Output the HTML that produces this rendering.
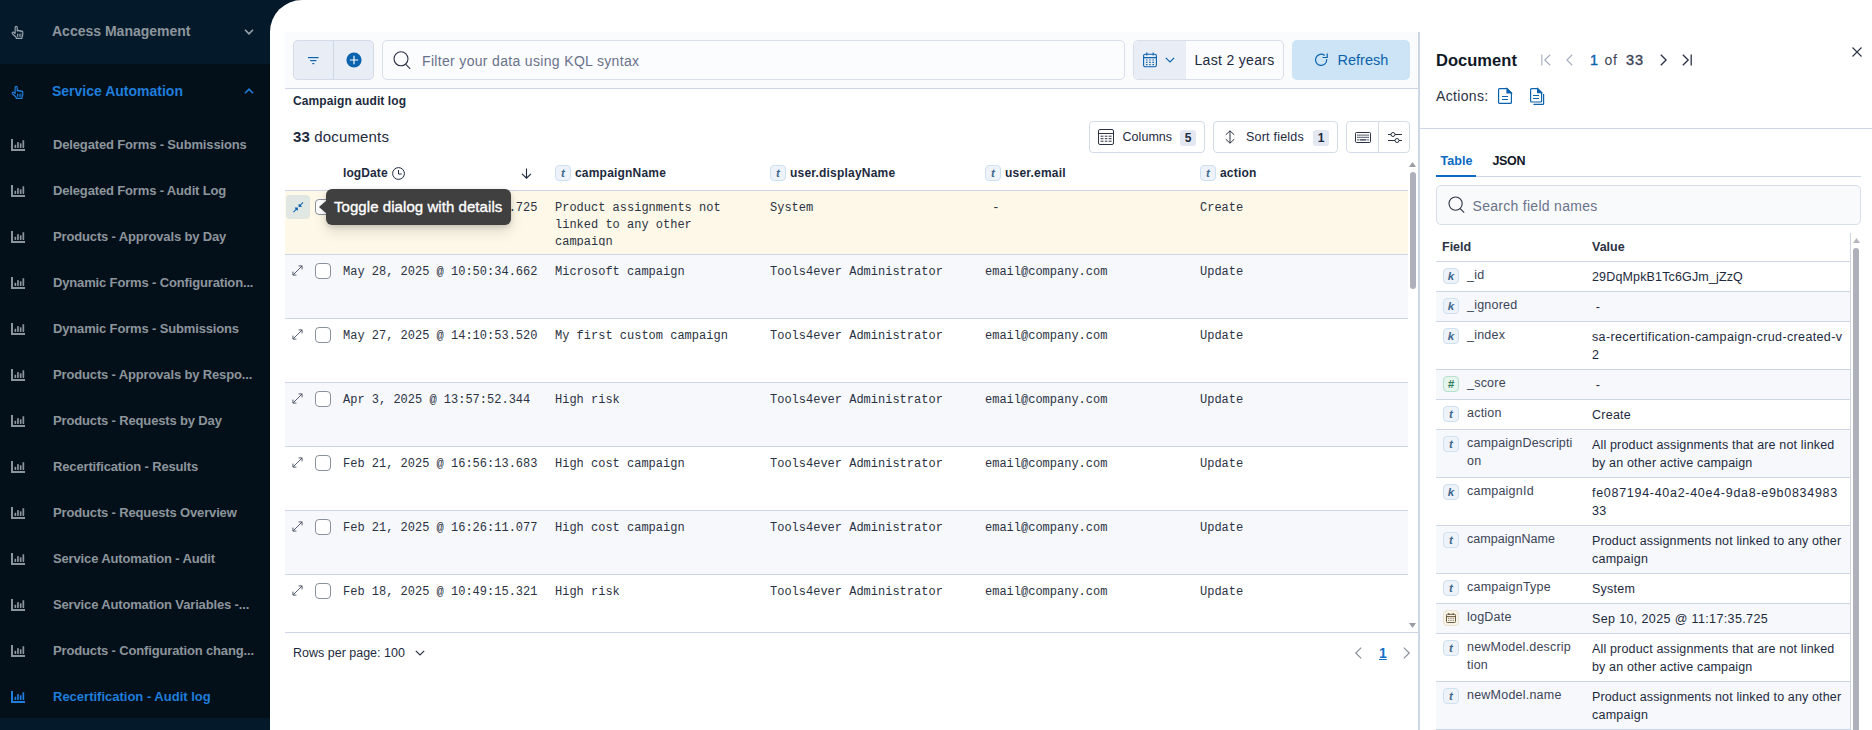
<!DOCTYPE html>
<html lang="en">
<head>
<meta charset="utf-8">
<title>Recertification - Audit log</title>
<style>
*{box-sizing:border-box;margin:0;padding:0}
html,body{width:1872px;height:730px;overflow:hidden;background:#03101a;font-family:"Liberation Sans",sans-serif;color:#1d2a3e}
.abs{position:absolute}
svg{display:block;overflow:visible}
/* ---------- sidebar ---------- */
#side{position:absolute;left:0;top:0;width:270px;height:730px;background:#03101a}
#side .topband{position:absolute;left:0;top:0;width:330px;height:64px;background:#041a2b}
#side .botband{position:absolute;left:0;top:718px;width:270px;height:12px;background:#041a2b}
.grp{position:absolute;left:52px;font-size:14px;font-weight:bold;letter-spacing:0px;white-space:nowrap;line-height:20px}
.nav{position:absolute;left:53px;font-size:13px;font-weight:bold;color:#8d959c;white-space:nowrap;line-height:20px;letter-spacing:-0.15px}
.nav.on{color:#1f7ddb;letter-spacing:0}
.ico{position:absolute;left:10px}
/* ---------- main ---------- */
#main{position:absolute;left:270px;top:0;width:1602px;height:730px;background:#fff;border-top-left-radius:32px}

/* toolbar */
#tb{position:absolute;left:15px;top:32px;width:1133px;height:57px;background:#fafbfd;border-bottom:1px solid #cdd6e5}
.btn2{position:absolute;left:23px;top:40px;width:81px;height:40px;background:#e9edf5;border:1px solid #d3dbe9;border-radius:5px}
.btn2 i{position:absolute;left:39px;top:0;width:1px;height:38px;background:#cfd7e6}
.inp{position:absolute;background:#fbfcfe;border:1px solid #d8deea;border-radius:5px}
.ph{position:absolute;color:#69728a;font-size:14px;white-space:nowrap;line-height:20px}
.t14{position:absolute;font-size:14px;white-space:nowrap;line-height:20px;color:#1d2a3e}
.t12b{position:absolute;font-size:12px;font-weight:bold;white-space:nowrap;line-height:16px;color:#1d2a3e}
.obtn{position:absolute;height:32px;top:121px;border:1px solid #d3dbe9;border-radius:4px;background:#fff}
.badge{position:absolute;top:8px;height:16px;background:#e3e8f2;border-radius:3px;font-size:12px;font-weight:bold;line-height:16px;text-align:center;color:#1d2a3e}

/* grid */
#grid{position:absolute;left:15px;top:157px;width:1123px;height:476px;overflow:hidden;border-bottom:1px solid #cdd6e5}
.hd{position:absolute;top:0;left:0;width:1123px;height:34px;border-bottom:1px solid #cdd6e5;background:#fff}
.tok{position:absolute;width:16px;height:16px;border:1px solid #cfe0f1;background:#eef3f9;border-radius:4px;color:#41688f;font:italic bold 11.5px/14px "Liberation Sans",sans-serif;text-align:center}
.row{position:absolute;left:0;width:1123px;height:64px;border-bottom:1px solid #cdd6e5;background:#fff}
.row.st{background:#f6f8fc}
.row.hl{background:#fdf8e7}
.c{position:absolute;top:9px;font:12px/17px "Liberation Mono",monospace;color:#2b3243;white-space:pre;letter-spacing:0}
.cb{position:absolute;left:30px;top:8px;width:16px;height:16px;border:1px solid #8b919c;border-radius:4px;background:#fff}
.ex{position:absolute;left:7px;top:10px}

/* flyout */
#fly{position:absolute;left:1148px;top:32px;width:454px;height:698px;background:#fff;border-left:2px solid #cdd5e6;overflow:hidden}
#fly .hb{position:absolute;left:0;top:96px;width:452px;height:1px;background:#cdd6e5}
#fly .tabs{position:absolute;left:16px;top:144px;width:425px;height:1px;background:#cdd6e5}
.fr{position:absolute;left:16px;width:415px;border-bottom:1px solid #cdd6e5;background:#fff}
.fr.st{background:#f6f8fc}
.fn{position:absolute;left:31px;top:4px;font-size:12.5px;line-height:18px;color:#3c4456;white-space:nowrap}
.fv{position:absolute;left:156px;top:6px;font-size:12.5px;line-height:18px;color:#1d2a3e;white-space:nowrap}
</style>
</head>
<body>
<div id="side">
  <div class="topband"></div>
  <div class="botband"></div>
  <svg class="ico" style="top:25px;left:10.5px" width="12.6" height="14.4" viewBox="0 0 14 16" fill="none" stroke="#9aa4ad" stroke-width="1.3" stroke-linejoin="round" stroke-linecap="round"><path d="M4.6 9.2V2.6a1.15 1.15 0 0 1 2.3 0v4.2M6.9 6.6a1.1 1.1 0 0 1 2.1 .2M9 7a1.1 1.1 0 0 1 2.1 .2M11.100 7.400a1.050 1.050 0 0 1 2 .3V10.6c0 1.200-.6 2.200-.9 2.900v1.300H5.800v-1.100C4.600 12.600 2.900 10.900 1.600 9.700a1.100 1.100 0 0 1 1.500-1.600l1.500 1.300"/><path d="M7.200 10.100v2.600M9.100 10.100v2.600M11 10.100v2.600" stroke-width="1.1"/></svg>
  <div class="grp" style="top:21px;color:#8d959c">Access Management</div>
  <svg class="abs" style="left:244px;top:29px" width="10" height="6" viewBox="0 0 10 6" fill="none" stroke="#9aa4ad" stroke-width="1.600"><path d="M1 .8l4 4 4-4"/></svg>
  <svg class="ico" style="top:85px;left:10.5px" width="12.6" height="14.4" viewBox="0 0 14 16" fill="none" stroke="#1f7ddb" stroke-width="1.3" stroke-linejoin="round" stroke-linecap="round"><path d="M4.6 9.2V2.6a1.15 1.15 0 0 1 2.3 0v4.2M6.9 6.6a1.1 1.1 0 0 1 2.1 .2M9 7a1.1 1.1 0 0 1 2.1 .2M11.100 7.400a1.050 1.050 0 0 1 2 .3V10.6c0 1.200-.6 2.200-.9 2.900v1.300H5.800v-1.100C4.600 12.600 2.900 10.900 1.600 9.700a1.100 1.100 0 0 1 1.500-1.600l1.500 1.300"/><path d="M7.200 10.100v2.600M9.100 10.100v2.600M11 10.100v2.600" stroke-width="1.1"/></svg>
  <div class="grp" style="top:81px;color:#1f7ddb">Service Automation</div>
  <svg class="abs" style="left:244px;top:88px" width="10" height="6" viewBox="0 0 10 6" fill="none" stroke="#1f7ddb" stroke-width="1.600"><path d="M1 5.200l4-4 4 4"/></svg>
  <svg class="ico" style="top:139px;left:10.5px" width="14" height="12" viewBox="0 0 14 12" fill="#8d959c"><path d="M0 0h2v10h12v2H0z"/><rect x="3.500" y="5.700" width="1.700" height="3.300" rx=".4"/><rect x="6.100" y="3" width="1.700" height="6" rx=".4"/><rect x="8.800" y="4.300" width="1.700" height="4.700" rx=".4"/><rect x="11.500" y="1.200" width="1.700" height="7.800" rx=".4"/></svg>
  <div class="nav" style="top:135px">Delegated Forms - Submissions</div>
  <svg class="ico" style="top:185px;left:10.5px" width="14" height="12" viewBox="0 0 14 12" fill="#8d959c"><path d="M0 0h2v10h12v2H0z"/><rect x="3.500" y="5.700" width="1.700" height="3.300" rx=".4"/><rect x="6.100" y="3" width="1.700" height="6" rx=".4"/><rect x="8.800" y="4.300" width="1.700" height="4.700" rx=".4"/><rect x="11.500" y="1.200" width="1.700" height="7.800" rx=".4"/></svg>
  <div class="nav" style="top:181px">Delegated Forms - Audit Log</div>
  <svg class="ico" style="top:231px;left:10.5px" width="14" height="12" viewBox="0 0 14 12" fill="#8d959c"><path d="M0 0h2v10h12v2H0z"/><rect x="3.500" y="5.700" width="1.700" height="3.300" rx=".4"/><rect x="6.100" y="3" width="1.700" height="6" rx=".4"/><rect x="8.800" y="4.300" width="1.700" height="4.700" rx=".4"/><rect x="11.500" y="1.200" width="1.700" height="7.800" rx=".4"/></svg>
  <div class="nav" style="top:227px">Products - Approvals by Day</div>
  <svg class="ico" style="top:277px;left:10.5px" width="14" height="12" viewBox="0 0 14 12" fill="#8d959c"><path d="M0 0h2v10h12v2H0z"/><rect x="3.500" y="5.700" width="1.700" height="3.300" rx=".4"/><rect x="6.100" y="3" width="1.700" height="6" rx=".4"/><rect x="8.800" y="4.300" width="1.700" height="4.700" rx=".4"/><rect x="11.500" y="1.200" width="1.700" height="7.800" rx=".4"/></svg>
  <div class="nav" style="top:273px">Dynamic Forms - Configuration...</div>
  <svg class="ico" style="top:323px;left:10.5px" width="14" height="12" viewBox="0 0 14 12" fill="#8d959c"><path d="M0 0h2v10h12v2H0z"/><rect x="3.500" y="5.700" width="1.700" height="3.300" rx=".4"/><rect x="6.100" y="3" width="1.700" height="6" rx=".4"/><rect x="8.800" y="4.300" width="1.700" height="4.700" rx=".4"/><rect x="11.500" y="1.200" width="1.700" height="7.800" rx=".4"/></svg>
  <div class="nav" style="top:319px">Dynamic Forms - Submissions</div>
  <svg class="ico" style="top:369px;left:10.5px" width="14" height="12" viewBox="0 0 14 12" fill="#8d959c"><path d="M0 0h2v10h12v2H0z"/><rect x="3.500" y="5.700" width="1.700" height="3.300" rx=".4"/><rect x="6.100" y="3" width="1.700" height="6" rx=".4"/><rect x="8.800" y="4.300" width="1.700" height="4.700" rx=".4"/><rect x="11.500" y="1.200" width="1.700" height="7.800" rx=".4"/></svg>
  <div class="nav" style="top:365px">Products - Approvals by Respo...</div>
  <svg class="ico" style="top:415px;left:10.5px" width="14" height="12" viewBox="0 0 14 12" fill="#8d959c"><path d="M0 0h2v10h12v2H0z"/><rect x="3.500" y="5.700" width="1.700" height="3.300" rx=".4"/><rect x="6.100" y="3" width="1.700" height="6" rx=".4"/><rect x="8.800" y="4.300" width="1.700" height="4.700" rx=".4"/><rect x="11.500" y="1.200" width="1.700" height="7.800" rx=".4"/></svg>
  <div class="nav" style="top:411px">Products - Requests by Day</div>
  <svg class="ico" style="top:461px;left:10.5px" width="14" height="12" viewBox="0 0 14 12" fill="#8d959c"><path d="M0 0h2v10h12v2H0z"/><rect x="3.500" y="5.700" width="1.700" height="3.300" rx=".4"/><rect x="6.100" y="3" width="1.700" height="6" rx=".4"/><rect x="8.800" y="4.300" width="1.700" height="4.700" rx=".4"/><rect x="11.500" y="1.200" width="1.700" height="7.800" rx=".4"/></svg>
  <div class="nav" style="top:457px">Recertification - Results</div>
  <svg class="ico" style="top:507px;left:10.5px" width="14" height="12" viewBox="0 0 14 12" fill="#8d959c"><path d="M0 0h2v10h12v2H0z"/><rect x="3.500" y="5.700" width="1.700" height="3.300" rx=".4"/><rect x="6.100" y="3" width="1.700" height="6" rx=".4"/><rect x="8.800" y="4.300" width="1.700" height="4.700" rx=".4"/><rect x="11.500" y="1.200" width="1.700" height="7.800" rx=".4"/></svg>
  <div class="nav" style="top:503px">Products - Requests Overview</div>
  <svg class="ico" style="top:553px;left:10.5px" width="14" height="12" viewBox="0 0 14 12" fill="#8d959c"><path d="M0 0h2v10h12v2H0z"/><rect x="3.500" y="5.700" width="1.700" height="3.300" rx=".4"/><rect x="6.100" y="3" width="1.700" height="6" rx=".4"/><rect x="8.800" y="4.300" width="1.700" height="4.700" rx=".4"/><rect x="11.500" y="1.200" width="1.700" height="7.800" rx=".4"/></svg>
  <div class="nav" style="top:549px">Service Automation - Audit</div>
  <svg class="ico" style="top:599px;left:10.5px" width="14" height="12" viewBox="0 0 14 12" fill="#8d959c"><path d="M0 0h2v10h12v2H0z"/><rect x="3.500" y="5.700" width="1.700" height="3.300" rx=".4"/><rect x="6.100" y="3" width="1.700" height="6" rx=".4"/><rect x="8.800" y="4.300" width="1.700" height="4.700" rx=".4"/><rect x="11.500" y="1.200" width="1.700" height="7.800" rx=".4"/></svg>
  <div class="nav" style="top:595px">Service Automation Variables -...</div>
  <svg class="ico" style="top:645px;left:10.5px" width="14" height="12" viewBox="0 0 14 12" fill="#8d959c"><path d="M0 0h2v10h12v2H0z"/><rect x="3.500" y="5.700" width="1.700" height="3.300" rx=".4"/><rect x="6.100" y="3" width="1.700" height="6" rx=".4"/><rect x="8.800" y="4.300" width="1.700" height="4.700" rx=".4"/><rect x="11.500" y="1.200" width="1.700" height="7.800" rx=".4"/></svg>
  <div class="nav" style="top:641px">Products - Configuration chang...</div>
  <svg class="ico" style="top:691px;left:10.5px" width="14" height="12" viewBox="0 0 14 12" fill="#1f7ddb"><path d="M0 0h2v10h12v2H0z"/><rect x="3.500" y="5.700" width="1.700" height="3.300" rx=".4"/><rect x="6.100" y="3" width="1.700" height="6" rx=".4"/><rect x="8.800" y="4.300" width="1.700" height="4.700" rx=".4"/><rect x="11.500" y="1.200" width="1.700" height="7.800" rx=".4"/></svg>
  <div class="nav on" style="top:687px">Recertification - Audit log</div>
</div>
<div id="main">
  <div id="tb"></div>
  <div class="btn2"><i></i>
    <svg class="abs" style="left:14px;top:16px" width="11" height="8" viewBox="0 0 11 8" fill="#0b62ad"><rect x="0" y="0" width="10.600" height="1.200"/><rect x="2.200" y="3" width="6.200" height="1.200"/><rect x="4.300" y="6" width="2" height="1.200"/></svg>
    <svg class="abs" style="left:51.500px;top:10.500px" width="16" height="16" viewBox="0 0 16 16"><circle cx="8" cy="8" r="7.600" fill="#0b62ad"/><path d="M8 3.800v8.400M3.800 8h8.400" stroke="#fff" stroke-width="1.150"/></svg>
  </div>
  <div class="inp" style="left:112px;top:40px;width:743px;height:40px"></div>
  <svg class="abs" style="left:122px;top:50px" width="20" height="20" viewBox="0 0 20 20" fill="none" stroke="#2b3243" stroke-width="1.100"><circle cx="9" cy="8.800" r="7"/><path d="M13.600 14.200l4.600 4.600"/></svg>
  <div class="ph" style="left:152px;top:51px;letter-spacing:.33px">Filter your data using KQL syntax</div>
  <div class="inp" style="left:863px;top:40px;width:151px;height:40px;overflow:hidden"><div style="position:absolute;left:0;top:0;width:52px;height:38px;background:#e9edf5"></div></div>
  <svg class="abs" style="left:873px;top:52px" width="14" height="16" viewBox="0 0 14 16" fill="none" stroke="#0b62ad" stroke-width="1.100"><rect x=".6" y="2.200" width="12.800" height="12.600" rx="1.600"/><path d="M.6 5.600h12.800M3.800 .4v3M10.200 .4v3"/><path d="M3 8h1.500M6.200 8h1.500M9.400 8h1.500M3 10.300h1.500M6.200 10.300h1.500M9.400 10.300h1.500M3 12.600h1.500M6.200 12.600h1.500M9.400 12.600h1.500" stroke-width="1.200"/></svg>
  <svg class="abs" style="left:895px;top:57px" width="10" height="6" viewBox="0 0 10 6" fill="none" stroke="#0b62ad" stroke-width="1.200"><path d="M.8 .8l4.200 4.200 4.200-4.200"/></svg>
  <div class="t14" style="left:924.500px;top:50px;letter-spacing:.32px">Last 2 years</div>
  <div class="abs" style="left:1022px;top:40px;width:118px;height:40px;background:#cce4f5;border-radius:5px"></div>
  <svg class="abs" style="left:1043px;top:52px" width="15" height="16" viewBox="0 0 15 16" fill="none" stroke="#0b62ad" stroke-width="1.200"><path d="M11.700 3.500A5.600 5.600 0 1 0 13.700 7.300"/><path d="M14.200 1.400V5.500H9.600" stroke-linejoin="miter"/></svg>
  <div class="t14" style="left:1067.500px;top:50px;color:#0b62ad;font-size:14.5px">Refresh</div>

  <div class="t12b" style="left:23px;top:93px;letter-spacing:.1px">Campaign audit log</div>
  <div class="t14" style="left:23px;top:127px;letter-spacing:.15px;font-size:15px"><b>33</b> documents</div>

  <div class="obtn" style="left:819px;width:116px">
    <svg class="abs" style="left:8px;top:7px" width="16" height="16" viewBox="0 0 16 16" fill="none" stroke="#2b3243" stroke-width="1"><rect x=".5" y=".5" width="15" height="15" rx="1.500"/><path d="M.5 4.500h15M2.500 7.200h3M6.800 7.200h2.600M10.600 7.200h3M2.500 9.700h3M6.800 9.700h2.600M10.600 9.700h3M2.500 12.200h3M6.800 12.200h2.600M10.600 12.200h3"/></svg>
    <div class="t14" style="left:32.500px;top:5px;font-size:12.5px;letter-spacing:.05px">Columns</div>
    <div class="badge" style="left:90px;width:16px">5</div>
  </div>
  <div class="obtn" style="left:943px;width:125px">
    <svg class="abs" style="left:11px;top:8px" width="10" height="14" viewBox="0 0 10 14" fill="none" stroke="#2b3243" stroke-width="1"><path d="M5 .8v12.400M.8 4.800L5 .8l4.200 4M.8 9.200L5 13.200l4.200-4"/></svg>
    <div class="t14" style="left:32px;top:5px;font-size:12.5px;letter-spacing:.22px">Sort fields</div>
    <div class="badge" style="left:99px;width:16px">1</div>
  </div>
  <div class="obtn" style="left:1076px;width:64px"><i style="position:absolute;left:31px;top:0;width:1px;height:30px;background:#d3dbe9"></i>
    <svg class="abs" style="left:8px;top:10px" width="16" height="11" viewBox="0 0 16 11" fill="none" stroke="#2b3243" stroke-width="1"><rect x=".5" y=".5" width="15" height="10" rx="1"/><path d="M2.300 3.200h11.400M2.300 5.400h11.400" stroke-dasharray="1.300 .72" stroke-width="1.300"/><path d="M2.300 7.800h1.300M4.600 7.800h6.800M12.400 7.800h1.300" stroke-width="1.300"/></svg>
    <svg class="abs" style="left:41px;top:10px" width="14" height="11" viewBox="0 0 14 11" fill="none" stroke="#2b3243" stroke-width="1"><path d="M0 2.500h3M7 2.500h7M0 8.500h7M11 8.500h3"/><circle cx="5" cy="2.500" r="2"/><circle cx="9" cy="8.500" r="2"/></svg>
  </div>
<div id="grid">
<div class="hd">
<div class="t12b" style="left:58px;top:8px;letter-spacing:.1px">logDate</div>
<svg class="abs" style="left:107px;top:10px" width="13" height="13" viewBox="0 0 13 13" fill="none" stroke="#1d2a3e" stroke-width="1"><circle cx="6.500" cy="6.500" r="5.900"/><path d="M6.500 3v4h3.200"/></svg>
<svg class="abs" style="left:236px;top:11px" width="11" height="11" viewBox="0 0 11 11" fill="none" stroke="#1d2a3e" stroke-width="1.100"><path d="M5.500 .5v9.500M1 5.800l4.500 4.400 4.500-4.400"/></svg>
<div class="tok" style="left:270px;top:8px">t</div><div class="t12b" style="left:290px;top:8px;letter-spacing:.2px">campaignName</div>
<div class="tok" style="left:485px;top:8px">t</div><div class="t12b" style="left:505px;top:8px;letter-spacing:.2px">user.displayName</div>
<div class="tok" style="left:700px;top:8px">t</div><div class="t12b" style="left:720px;top:8px;letter-spacing:.2px">user.email</div>
<div class="tok" style="left:915px;top:8px">t</div><div class="t12b" style="left:935px;top:8px;letter-spacing:.2px">action</div>
</div>
<div class="row hl" style="top:34px">
<div class="abs" style="left:1px;top:4px;width:24px;height:24px;border-radius:4px;background:#e1e8e4"></div><svg class="abs" style="left:8px;top:11px" width="10.500" height="10.500" viewBox="0 0 12 12" fill="none" stroke="#0f62ad" stroke-width="1.150"><path d="M11.500 .5L7 5M7 2.200V5h2.800M.5 11.500L5 7M2.200 7H5v2.800"/></svg>
<div class="cb"></div>
<div class="c" style="left:58px">Sep 10, 2025 @ 11:17:35.725</div>
<div class="c" style="left:270px;height:46px;overflow:hidden">Product assignments not
linked to any other
campaign</div>
<div class="c" style="left:485px">System</div>
<div class="c" style="left:700px"> -</div>
<div class="c" style="left:915px">Create</div>
</div>
<div class="row st" style="top:98px">
<svg class="ex" width="11" height="11" viewBox="0 0 12 12" fill="none" stroke="#454d5e" stroke-width="1"><path d="M1.200 10.800L10.800 1.200M7.200 1h3.800v3.800M1 7.200V11h3.800"/></svg>
<div class="cb"></div>
<div class="c" style="left:58px">May 28, 2025 @ 10:50:34.662</div>
<div class="c" style="left:270px;height:46px;overflow:hidden">Microsoft campaign</div>
<div class="c" style="left:485px">Tools4ever Administrator</div>
<div class="c" style="left:700px">email@company.com</div>
<div class="c" style="left:915px">Update</div>
</div>
<div class="row " style="top:162px">
<svg class="ex" width="11" height="11" viewBox="0 0 12 12" fill="none" stroke="#454d5e" stroke-width="1"><path d="M1.200 10.800L10.800 1.200M7.200 1h3.800v3.800M1 7.200V11h3.800"/></svg>
<div class="cb"></div>
<div class="c" style="left:58px">May 27, 2025 @ 14:10:53.520</div>
<div class="c" style="left:270px;height:46px;overflow:hidden">My first custom campaign</div>
<div class="c" style="left:485px">Tools4ever Administrator</div>
<div class="c" style="left:700px">email@company.com</div>
<div class="c" style="left:915px">Update</div>
</div>
<div class="row st" style="top:226px">
<svg class="ex" width="11" height="11" viewBox="0 0 12 12" fill="none" stroke="#454d5e" stroke-width="1"><path d="M1.200 10.800L10.800 1.200M7.200 1h3.800v3.800M1 7.200V11h3.800"/></svg>
<div class="cb"></div>
<div class="c" style="left:58px">Apr 3, 2025 @ 13:57:52.344</div>
<div class="c" style="left:270px;height:46px;overflow:hidden">High risk</div>
<div class="c" style="left:485px">Tools4ever Administrator</div>
<div class="c" style="left:700px">email@company.com</div>
<div class="c" style="left:915px">Update</div>
</div>
<div class="row " style="top:290px">
<svg class="ex" width="11" height="11" viewBox="0 0 12 12" fill="none" stroke="#454d5e" stroke-width="1"><path d="M1.200 10.800L10.800 1.200M7.200 1h3.800v3.800M1 7.200V11h3.800"/></svg>
<div class="cb"></div>
<div class="c" style="left:58px">Feb 21, 2025 @ 16:56:13.683</div>
<div class="c" style="left:270px;height:46px;overflow:hidden">High cost campaign</div>
<div class="c" style="left:485px">Tools4ever Administrator</div>
<div class="c" style="left:700px">email@company.com</div>
<div class="c" style="left:915px">Update</div>
</div>
<div class="row st" style="top:354px">
<svg class="ex" width="11" height="11" viewBox="0 0 12 12" fill="none" stroke="#454d5e" stroke-width="1"><path d="M1.200 10.800L10.800 1.200M7.200 1h3.800v3.800M1 7.200V11h3.800"/></svg>
<div class="cb"></div>
<div class="c" style="left:58px">Feb 21, 2025 @ 16:26:11.077</div>
<div class="c" style="left:270px;height:46px;overflow:hidden">High cost campaign</div>
<div class="c" style="left:485px">Tools4ever Administrator</div>
<div class="c" style="left:700px">email@company.com</div>
<div class="c" style="left:915px">Update</div>
</div>
<div class="row " style="top:418px">
<svg class="ex" width="11" height="11" viewBox="0 0 12 12" fill="none" stroke="#454d5e" stroke-width="1"><path d="M1.200 10.800L10.800 1.200M7.200 1h3.800v3.800M1 7.200V11h3.800"/></svg>
<div class="cb"></div>
<div class="c" style="left:58px">Feb 18, 2025 @ 10:49:15.321</div>
<div class="c" style="left:270px;height:46px;overflow:hidden">High risk</div>
<div class="c" style="left:485px">Tools4ever Administrator</div>
<div class="c" style="left:700px">email@company.com</div>
<div class="c" style="left:915px">Update</div>
</div>
</div>
<div class="abs" style="left:1138px;top:157px;width:10px;height:475px;background:#fff"></div>
<svg class="abs" style="left:1139px;top:162px" width="7" height="5" viewBox="0 0 7 5" fill="#9a9da3"><path d="M0 5L3.500 0 7 5z"/></svg>
<div class="abs" style="left:1140px;top:172px;width:6px;height:117px;border-radius:3px;background:#aeb1b9"></div>
<svg class="abs" style="left:1139px;top:623px" width="7" height="5" viewBox="0 0 7 5" fill="#9a9da3"><path d="M0 0L3.500 5 7 0z"/></svg>
<div class="abs" style="left:15px;top:632px;width:1133px;height:1px;background:#cdd6e5"></div>
<div class="t14" style="left:23px;top:643px;font-size:12.5px;letter-spacing:0">Rows per page: 100</div>
<svg class="abs" style="left:145px;top:650px" width="10" height="6" viewBox="0 0 10 6" fill="none" stroke="#2b3243" stroke-width="1.200"><path d="M.8 .8l4.200 4.200 4.200-4.200"/></svg>
<svg class="abs" style="left:1085px;top:647px" width="7" height="12" viewBox="0 0 7 12" fill="none" stroke="#8a909c" stroke-width="1.200"><path d="M6.200 .6L.8 6l5.400 5.400"/></svg>
<div class="t14" style="left:1109px;top:643px;font-size:14px;color:#1471c8;text-decoration:underline;font-weight:bold">1</div>
<svg class="abs" style="left:1133px;top:647px" width="7" height="12" viewBox="0 0 7 12" fill="none" stroke="#8a909c" stroke-width="1.200"><path d="M.8 .6L6.200 6 .8 11.400"/></svg>
<div class="abs" style="left:56px;top:189px;width:185px;height:36px;border-radius:6px;background:#404040;box-shadow:0 6px 14px rgba(0,0,0,.13),0 2px 5px rgba(0,0,0,.12)"></div>
<svg class="abs" style="left:49px;top:200px" width="8" height="14" viewBox="0 0 8 14" fill="#404040"><path d="M8 0L0 7l8 7z"/></svg>
<div class="abs" style="left:64px;top:197px;color:#fff;font-size:15px;line-height:20px;white-space:nowrap;letter-spacing:.06px;-webkit-text-stroke:.35px #fff">Toggle dialog with details</div>

  <div id="fly">
    <div class="abs" style="left:16px;top:18px;font-size:16.5px;font-weight:bold;line-height:20px;color:#111827;letter-spacing:.03px">Document</div>
    <svg class="abs" style="left:121px;top:22px" width="10" height="12" viewBox="0 0 10 12" fill="none" stroke="#a9b1c2" stroke-width="1.200"><path d="M.8 .5v11M9.200 .8L3.800 6l5.400 5.200"/></svg>
    <svg class="abs" style="left:146px;top:22px" width="7" height="12" viewBox="0 0 7 12" fill="none" stroke="#a9b1c2" stroke-width="1.200"><path d="M6.200 .8L.9 6l5.300 5.200"/></svg>
    <div class="t14" style="left:170px;top:18px;color:#0b62ad;font-size:14.5px;-webkit-text-stroke:.4px #0b62ad">1</div>
    <div class="t14" style="left:184.500px;top:18px;color:#3c4456;letter-spacing:.6px">of</div>
    <div class="t14" style="left:206px;top:18px;color:#3c4456;letter-spacing:1px;font-size:14.5px;-webkit-text-stroke:.4px #3c4456">33</div>
    <svg class="abs" style="left:240px;top:22px" width="7" height="12" viewBox="0 0 7 12" fill="none" stroke="#2b3243" stroke-width="1.300"><path d="M.8 .8L6.100 6 .8 11.200"/></svg>
    <svg class="abs" style="left:262px;top:22px" width="10" height="12" viewBox="0 0 10 12" fill="none" stroke="#2b3243" stroke-width="1.300"><path d="M9.200 .5v11M.8 .8L6.200 6 .8 11.200"/></svg>
    <svg class="abs" style="left:432px;top:15px" width="10" height="10" viewBox="0 0 10 10" fill="none" stroke="#2b3243" stroke-width="1.100"><path d="M.5 .5l9 9M9.500 .5l-9 9"/></svg>
    <div class="t14" style="left:16px;top:54px;color:#2b3243;letter-spacing:.35px">Actions:</div>
    <svg class="abs" style="left:78px;top:56px" width="14" height="16" viewBox="0 0 14 16" fill="none" stroke="#0b62ad" stroke-width="1.200"><path d="M.6 1.600a1 1 0 0 1 1-1h7.400l4.400 4.400v9.400a1 1 0 0 1-1 1H1.600a1 1 0 0 1-1-1z"/><path d="M9 .6v4.400h4.400z" fill="#0b62ad"/><path d="M4 8.500h6M4 11.500h6"/></svg>
    <svg class="abs" style="left:110px;top:56px" width="15" height="17" viewBox="0 0 15 17" fill="none" stroke="#0b62ad" stroke-width="1.200"><path d="M.6 1.600a1 1 0 0 1 1-1h6l4 4v8.400a1 1 0 0 1-1 1h-9a1 1 0 0 1-1-1z"/><path d="M7.600 .6v4h4z" fill="#0b62ad"/><path d="M3 7.500h6M3 10.500h6"/><path d="M13.600 6v9.400a1 1 0 0 1-1 1H3.500"/></svg>
    <div class="hb"></div>
    <div class="t12b" style="left:20.500px;top:121px;color:#0b6ac2;font-size:12.500px;letter-spacing:.05px">Table</div>
    <div class="t12b" style="left:72.500px;top:121px;font-size:12.500px;color:#111827;letter-spacing:-.35px">JSON</div>
    <div class="tabs"></div>
    <div class="abs" style="left:16px;top:143px;width:40px;height:2px;background:#0b6ac2"></div>
    <div class="inp" style="left:16px;top:153px;width:425px;height:40px;background:#f9fafc"></div>
    <svg class="abs" style="left:28px;top:164px" width="18" height="18" viewBox="0 0 18 18" fill="none" stroke="#2b3243" stroke-width="1.100"><circle cx="7.600" cy="7.600" r="6.600"/><path d="M12 12.400l4.200 4.200"/></svg>
    <div class="ph" style="left:52.500px;top:164px;letter-spacing:.29px">Search field names</div>
    <div class="t12b" style="left:22px;top:207px;font-size:12.500px;color:#2b3243">Field</div>
    <div class="t12b" style="left:172px;top:207px;font-size:12.500px;color:#2b3243">Value</div>
    <div class="abs" style="left:16px;top:229px;width:415px;height:1px;background:#cdd6e5"></div>
<div class="fr" style="top:230px;height:30px">
<div class="tok" style="left:7px;top:6px">k</div>
<div class="fn"><span style="letter-spacing:0.22px">_id</span></div>
<div class="fv"><span style="letter-spacing:0.15px">29DqMpkB1Tc6GJm_jZzQ</span></div>
</div>
<div class="fr st" style="top:260px;height:30px">
<div class="tok" style="left:7px;top:6px">k</div>
<div class="fn"><span style="letter-spacing:0.22px">_ignored</span></div>
<div class="fv"><span style="letter-spacing:0.25px">&nbsp;-</span></div>
</div>
<div class="fr" style="top:290px;height:48px">
<div class="tok" style="left:7px;top:6px">k</div>
<div class="fn"><span style="letter-spacing:0.22px">_index</span></div>
<div class="fv"><span style="letter-spacing:0.37px">sa-recertification-campaign-crud-created-v</span><br><span style="letter-spacing:0.25px">2</span></div>
</div>
<div class="fr st" style="top:338px;height:30px">
<div class="tok" style="left:7px;top:6px;background:#e6f6ee;border-color:#b5e0cb;color:#2f7a5b">#</div>
<div class="fn"><span style="letter-spacing:0.22px">_score</span></div>
<div class="fv"><span style="letter-spacing:0.25px">&nbsp;-</span></div>
</div>
<div class="fr" style="top:368px;height:30px">
<div class="tok" style="left:7px;top:6px">t</div>
<div class="fn"><span style="letter-spacing:0.22px">action</span></div>
<div class="fv"><span style="letter-spacing:0.25px">Create</span></div>
</div>
<div class="fr st" style="top:398px;height:48px">
<div class="tok" style="left:7px;top:6px">t</div>
<div class="fn"><span style="letter-spacing:0.16px">campaignDescripti</span><br><span style="letter-spacing:0.22px">on</span></div>
<div class="fv"><span style="letter-spacing:0.16px">All product assignments that are not linked</span><br><span style="letter-spacing:0.15px">by an other active campaign</span></div>
</div>
<div class="fr" style="top:446px;height:48px">
<div class="tok" style="left:7px;top:6px">k</div>
<div class="fn"><span style="letter-spacing:0.22px">campaignId</span></div>
<div class="fv"><span style="letter-spacing:0.71px">fe087194-40a2-40e4-9da8-e9b0834983</span><br><span style="letter-spacing:0.25px">33</span></div>
</div>
<div class="fr st" style="top:494px;height:48px">
<div class="tok" style="left:7px;top:6px">t</div>
<div class="fn"><span style="letter-spacing:0.04px">campaignName</span></div>
<div class="fv"><span style="letter-spacing:0.14px">Product assignments not linked to any other</span><br><span style="letter-spacing:0.25px">campaign</span></div>
</div>
<div class="fr" style="top:542px;height:30px">
<div class="tok" style="left:7px;top:6px">t</div>
<div class="fn"><span style="letter-spacing:0.22px">campaignType</span></div>
<div class="fv"><span style="letter-spacing:0.25px">System</span></div>
</div>
<div class="fr st" style="top:572px;height:30px">
<div class="tok" style="left:7px;top:6px;background:#f8f3e8;border-color:#ece3d0"><svg style="margin:2px 0 0 2px" width="10" height="10" viewBox="0 0 10 10" fill="none" stroke="#5a4a2a" stroke-width=".9"><rect x=".5" y="1.300" width="9" height="8.200" rx="1"/><path d="M.5 3.600h9M2.800 0v2M7.200 0v2M2.300 5.400h1M4.500 5.400h1M6.700 5.400h1M2.300 7.400h1M4.500 7.400h1M6.700 7.400h1" /></svg></div>
<div class="fn"><span style="letter-spacing:0.22px">logDate</span></div>
<div class="fv"><span style="letter-spacing:0.37px">Sep 10, 2025 @ 11:17:35.725</span></div>
</div>
<div class="fr" style="top:602px;height:48px">
<div class="tok" style="left:7px;top:6px">t</div>
<div class="fn"><span style="letter-spacing:0.20px">newModel.descrip</span><br><span style="letter-spacing:0.22px">tion</span></div>
<div class="fv"><span style="letter-spacing:0.16px">All product assignments that are not linked</span><br><span style="letter-spacing:0.15px">by an other active campaign</span></div>
</div>
<div class="fr st" style="top:650px;height:48px">
<div class="tok" style="left:7px;top:6px">t</div>
<div class="fn"><span style="letter-spacing:0.22px">newModel.name</span></div>
<div class="fv"><span style="letter-spacing:0.14px">Product assignments not linked to any other</span><br><span style="letter-spacing:0.25px">campaign</span></div>
</div>
    <div class="abs" style="left:430px;top:201px;width:1px;height:500px;background:#cdd6e5"></div>
    <svg class="abs" style="left:432.500px;top:206px" width="7" height="5" viewBox="0 0 7 5" fill="#b5b8be"><path d="M0 5L3.500 0 7 5z"/></svg>
    <div class="abs" style="left:433px;top:216px;width:6px;height:500px;border-radius:3px;background:#aeb1b9"></div>
  </div>
</div>
</body>
</html>
